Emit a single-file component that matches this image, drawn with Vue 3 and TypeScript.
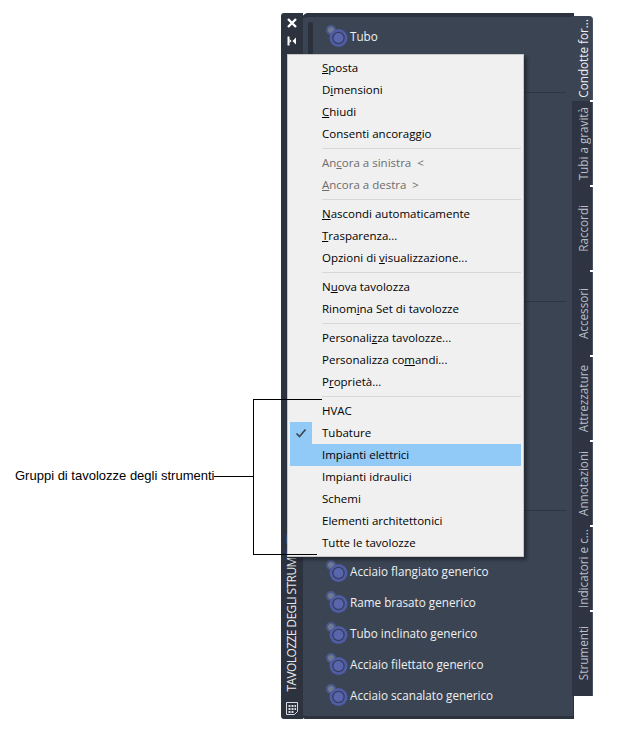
<script setup lang="ts">
type MenuItem = { html: string; disabled?: boolean; checked?: boolean; active?: boolean } | "sep";

const menu: MenuItem[] = [
  { html: "<u>S</u>posta" },
  { html: "D<u>i</u>mensioni" },
  { html: "<u>C</u>hiudi" },
  { html: "Consenti ancora<u>g</u>gio" },
  "sep",
  { html: "An<u>c</u>ora a sinistra&nbsp; &lt;", disabled: true },
  { html: "<u>A</u>ncora a destra&nbsp; &gt;", disabled: true },
  "sep",
  { html: "<u>N</u>ascondi automaticamente" },
  { html: "<u>T</u>rasparenza..." },
  { html: "Opzioni di <u>v</u>isualizzazione..." },
  "sep",
  { html: "N<u>u</u>ova tavolozza" },
  { html: "Rinom<u>i</u>na Set di tavolozze" },
  "sep",
  { html: "Personali<u>z</u>za tavolozze..." },
  { html: "Personalizza co<u>m</u>andi..." },
  { html: "P<u>r</u>oprietà..." },
  "sep",
  { html: "HVAC" },
  { html: "Tubature", checked: true },
  { html: "Impianti elettrici", active: true },
  { html: "Impianti idraulici" },
  { html: "Schemi" },
  { html: "Elementi architettonici" },
  { html: "Tutte le tavolozze" },
];

const tabs = [
  "Condotte for...",
  "Tubi a gravità",
  "Raccordi",
  "Accessori",
  "Attrezzature",
  "Annotazioni",
  "Indicatori e c...",
  "Strumenti",
];

const tools = [
  "Acciaio flangiato generico",
  "Rame brasato generico",
  "Tubo inclinato generico",
  "Acciaio filettato generico",
  "Acciaio scanalato generico",
];
</script>

<template>
  <div class="page">
    <div class="palette">
      <div class="strip">
        <svg class="close" width="10" height="10" viewBox="0 0 10 10">
          <path d="M1 1 9 9M9 1 1 9" stroke="#fff" stroke-width="2.4" fill="none" />
        </svg>
        <svg class="pin" width="10" height="10" viewBox="0 0 10 10">
          <path d="M1.500 0.500v9" stroke="#fff" stroke-width="2" />
          <path d="M2.500 3 4.500 5 2.500 7zM9 1.500v7L5.500 5z" fill="#fff" />
        </svg>
        <div class="strip-title">TAVOLOZZE DEGLI STRUMENTI</div>
        <svg class="props" width="14" height="14" viewBox="0 0 14 14">
          <path d="M1.500 0.500h11v9l-3 3h-8z" fill="none" stroke="#d8dbdf" />
          <path d="M3.500 3h2v2h-2zM6.500 3h2v2h-2zM9.500 3h1.500v2h-1.500zM3.500 6h2v2h-2zM6.500 6h2v2h-2zM9.500 6h1.500v2h-1.500zM3.500 9h2v2h-2zM6.500 9h2v2h-2z" fill="#d8dbdf" />
        </svg>
      </div>

      <div class="content">
        <div class="scroll" />
        <section class="sec sec-first">
          <div class="tool">
            <svg class="ico" width="24" height="24" viewBox="0 0 24 24">
              <circle cx="6" cy="6" r="5" fill="#4d5a8c" />
              <circle cx="6" cy="6" r="3" fill="#6f7a91" />
              <circle cx="13.500" cy="14" r="9" fill="#505ca4" />
              <circle cx="13.500" cy="14" r="5.600" fill="#5a66ac" stroke="#363f63" stroke-width="1.300" />
            </svg>
            <span>Tubo</span>
          </div>
        </section>
        <section class="sec sec-a" />
        <section class="sec sec-b" />
        <section class="sec sec-last">
          <div v-for="t in tools" :key="t" class="tool">
            <svg class="ico" width="24" height="24" viewBox="0 0 24 24">
              <circle cx="6" cy="6" r="5" fill="#4d5a8c" />
              <circle cx="6" cy="6" r="3" fill="#6f7a91" />
              <circle cx="13.500" cy="14" r="9" fill="#505ca4" />
              <circle cx="13.500" cy="14" r="5.600" fill="#5a66ac" stroke="#363f63" stroke-width="1.300" />
            </svg>
            <span>{{ t }}</span>
          </div>
        </section>
      </div>

      <div class="tabs">
        <div v-for="(t, i) in tabs" :key="t" class="tab" :class="{ on: i === 0 }">
          <span>{{ t }}</span>
        </div>
      </div>

      <div class="menu">
        <template v-for="(m, i) in menu" :key="i">
          <div v-if="m === 'sep'" class="sep" />
          <div v-else class="item" :class="{ off: m.disabled, active: m.active }">
            <div class="gutter" :class="{ checked: m.checked }">
              <svg v-if="m.checked" width="12" height="10" viewBox="0 0 12 10">
                <path d="M1.500 5.500 4.500 8.500 10.500 1.500" fill="none" stroke="#40464f" stroke-width="1.700" />
              </svg>
            </div>
            <span class="label" v-html="m.html" />
          </div>
        </template>
      </div>
    </div>

    <div class="note">
      <span class="note-text">Gruppi di tavolozze degli strumenti</span>
      <div class="note-line" />
      <div class="bracket" />
    </div>
  </div>
</template>

<style>
html,
body {
  background: #fff;
}
</style>

<style scoped>
.page {
  position: relative;
  width: 617px;
  height: 745px;
  padding: 13px 0 0 281px;
  box-sizing: border-box;
  overflow: hidden;
  font-family: "Open Sans", "Noto Sans", sans-serif;
}
.palette {
  position: relative;
  display: flex;
  width: 312px;
  height: 706px;
}
.strip {
  width: 22px;
  height: 706px;
  flex: none;
  background: #2c323e;
  border-radius: 3px 0 0 3px;
  display: flex;
  flex-direction: column;
  align-items: center;
  padding-top: 5px;
  box-sizing: border-box;
}
.close {
  margin-left: -1px;
}
.pin {
  margin-top: 8px;
}
.strip-title {
  margin-top: auto;
  writing-mode: vertical-rl;
  transform: rotate(180deg);
  font-size: 12px;
  line-height: 16px;
  color: #e8eaec;
  letter-spacing: -0.6px;
  white-space: nowrap;
}
.props {
  margin: 11px 0 3px;
}
.content {
  position: relative;
  width: 271px;
  height: 706px;
  flex: none;
  background: #3b4453;
  box-sizing: border-box;
  border-top: 4px solid #2c323e;
  border-bottom: 3px solid #2c323e;
  border-right: 1px solid #2c323e;
  border-radius: 6px 0 0 4px;
  box-shadow: -1px 0 0 #2c323e;
}
.scroll {
  position: absolute;
  left: 5px;
  top: 5px;
  width: 5px;
  height: 40px;
  border-radius: 3px;
  background: #2b313c;
}
.sec {
  box-sizing: border-box;
  margin-right: 7px;
  border-bottom: 1px solid #2e3542;
}
.sec-first {
  height: 76px;
  padding-top: 3px;
}
.sec-a,
.sec-b {
  height: 209px;
}
.sec-last {
  border-bottom: 0;
  padding-top: 44px;
}
.tool {
  display: flex;
  align-items: center;
  height: 31px;
  padding-left: 22px;
  color: #eef0f2;
  font-size: 11.7px;
}
.ico {
  flex: none;
  margin-right: 1px;
}
.tabs {
  position: relative;
  width: 21px;
  flex: none;
  margin: 3px 0 0 -2px;
  display: flex;
  flex-direction: column;
}
.tab {
  height: 85px;
  box-sizing: border-box;
  background: #2e3441;
  border-right: 1px solid #4a5261;
  padding-left: 2px;
  display: flex;
  align-items: center;
  justify-content: center;
  color: #b9bfc7;
  font-size: 11.7px;
  position: relative;
}
.tab span {
  writing-mode: vertical-rl;
  transform: rotate(180deg);
  white-space: nowrap;
  line-height: 19px;
}
.tab:not(:first-child)::before {
  content: "";
  position: absolute;
  right: -1px;
  top: -1px;
  width: 3px;
  height: 2px;
  background: #fff;
}
.tab.on {
  background: #3b4453;
  color: #eef0f2;
  border-radius: 0 4px 0 0;
}
.menu {
  position: absolute;
  left: 6px;
  top: 41px;
  width: 237px;
  height: 503px;
  box-sizing: border-box;
  padding: 2px;
  background: #f0f0f0;
  border: 1px solid #c6c6c6;
  box-shadow: 3px 3px 3px rgba(20, 24, 32, 0.55);
  color: #000;
  font-size: 11.5px;
}
.item {
  display: flex;
  align-items: center;
  height: 22px;
  white-space: nowrap;
}
.label {
  margin-bottom: 2px;
}
.item u {
  text-underline-offset: 1px;
}
.item.off {
  color: #6d6d6d;
}
.item.active {
  background: #91c9f7;
}
.gutter {
  width: 22px;
  height: 22px;
  margin-right: 10px;
  flex: none;
  display: flex;
  align-items: center;
  justify-content: center;
}
.gutter.checked {
  background: #91c9f7;
}
.sep {
  height: 1px;
  margin: 3px 0 3px 32px;
  background: #d7d7d7;
}
.note {
  position: absolute;
  inset: 0;
  pointer-events: none;
}
.note-text {
  position: absolute;
  left: 15px;
  top: 469px;
  font: 13px/14px "Liberation Sans", sans-serif;
  color: #000;
  white-space: nowrap;
}
.note-line {
  position: absolute;
  left: 214px;
  top: 476px;
  width: 40px;
  height: 1px;
  background: #000;
}
.bracket {
  position: absolute;
  left: 253px;
  top: 399px;
  width: 63px;
  height: 154px;
  border: 1px solid #000;
  border-right: 0;
}
.bracket::after {
  content: "";
  position: absolute;
  left: 63px;
  top: -1px;
  width: 5px;
  height: 1px;
  background: #000;
}
</style>
